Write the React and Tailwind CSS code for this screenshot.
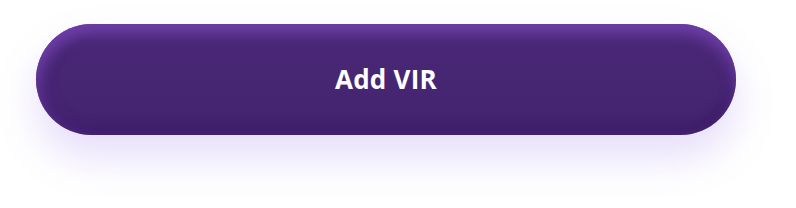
import React from 'react';

export default function App() {
  return (
    <div className="min-h-[208px] w-[796px] bg-white pt-6 pl-9">
      <button
        className="flex h-[111px] w-[700px] items-center justify-center rounded-full bg-gradient-to-b from-[#4a2878] to-[#43236f] pb-[1px] text-[26px] font-bold tracking-[0.01em] text-white shadow-[inset_0_10px_14px_rgba(120,70,180,0.75),inset_8px_0_14px_rgba(110,60,170,0.35),inset_0_-8px_12px_rgba(45,18,85,0.4),0_22px_40px_rgba(140,100,230,0.22)]"
        style={{ fontFamily: '"Open Sans", "Noto Sans", sans-serif' }}
      >
        Add VIR
      </button>
    </div>
  );
}
